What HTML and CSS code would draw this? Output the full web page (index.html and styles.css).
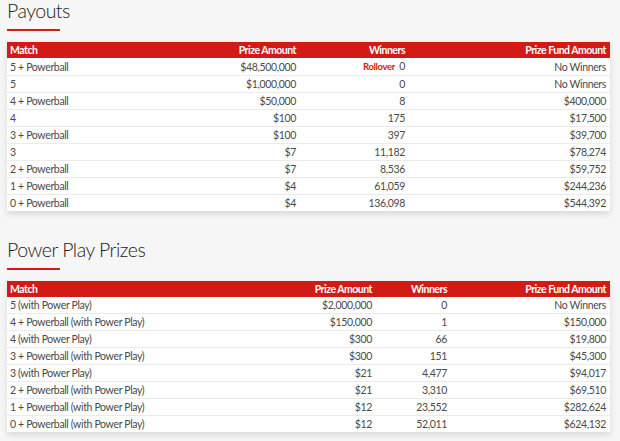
FILE: index.html
```html
<!DOCTYPE html>
<html>
<head>
<meta charset="utf-8">
<link rel="stylesheet" href="styles.css">
</head>
<body>
<section class="block">
  <h2 class="title">Payouts</h2>
  <div class="rule"></div>
  <table class="prizes t1">
    <colgroup><col class="c1"><col class="c2"><col class="c3"><col class="c4"></colgroup>
    <thead><tr><th class="l">Match</th><th>Prize Amount</th><th>Winners</th><th>Prize Fund Amount</th></tr></thead>
    <tbody>
      <tr><td class="l">5 + Powerball</td><td>$48,500,000</td><td><span class="roll">Rollover</span> 0</td><td>No Winners</td></tr>
      <tr><td class="l">5</td><td>$1,000,000</td><td>0</td><td>No Winners</td></tr>
      <tr><td class="l">4 + Powerball</td><td>$50,000</td><td>8</td><td>$400,000</td></tr>
      <tr><td class="l">4</td><td>$100</td><td>175</td><td>$17,500</td></tr>
      <tr><td class="l">3 + Powerball</td><td>$100</td><td>397</td><td>$39,700</td></tr>
      <tr><td class="l">3</td><td>$7</td><td>11,182</td><td>$78,274</td></tr>
      <tr><td class="l">2 + Powerball</td><td>$7</td><td>8,536</td><td>$59,752</td></tr>
      <tr><td class="l">1 + Powerball</td><td>$4</td><td>61,059</td><td>$244,236</td></tr>
      <tr><td class="l">0 + Powerball</td><td>$4</td><td>136,098</td><td>$544,392</td></tr>
    </tbody>
  </table>
</section>
<section class="block second">
  <h2 class="title">Power Play Prizes</h2>
  <div class="rule"></div>
  <table class="prizes t2">
    <colgroup><col class="c1"><col class="c2"><col class="c3"><col class="c4"></colgroup>
    <thead><tr><th class="l">Match</th><th>Prize Amount</th><th>Winners</th><th>Prize Fund Amount</th></tr></thead>
    <tbody>
      <tr><td class="l">5 (with Power Play)</td><td>$2,000,000</td><td>0</td><td>No Winners</td></tr>
      <tr><td class="l">4 + Powerball (with Power Play)</td><td>$150,000</td><td>1</td><td>$150,000</td></tr>
      <tr><td class="l">4 (with Power Play)</td><td>$300</td><td>66</td><td>$19,800</td></tr>
      <tr><td class="l">3 + Powerball (with Power Play)</td><td>$300</td><td>151</td><td>$45,300</td></tr>
      <tr><td class="l">3 (with Power Play)</td><td>$21</td><td>4,477</td><td>$94,017</td></tr>
      <tr><td class="l">2 + Powerball (with Power Play)</td><td>$21</td><td>3,310</td><td>$69,510</td></tr>
      <tr><td class="l">1 + Powerball (with Power Play)</td><td>$12</td><td>23,552</td><td>$282,624</td></tr>
      <tr><td class="l">0 + Powerball (with Power Play)</td><td>$12</td><td>52,011</td><td>$624,132</td></tr>
    </tbody>
  </table>
</section>
</body>
</html>
```
FILE: styles.css
```css
html, body {
  margin: 0;
  padding: 0;
}
body {
  background: #f6f6f6;
  font-family: Lato, "Open Sans", sans-serif;
  color: #4a4a4a;
  width: 620px;
  height: 441px;
  overflow: hidden;
}
.block {
  padding: 0 10px 0 7px;
}
.second {
  padding-top: 28px;
}
.title {
  margin: 0;
  font-weight: 300;
  font-size: 19.5px;
  line-height: 22px;
  color: #222;
  letter-spacing: -0.5px;
}
.rule {
  width: 53px;
  height: 2px;
  background: #d21b16;
  margin-top: 7px;
  margin-bottom: 11px;
}
.prizes {
  width: 603px;
  border-collapse: collapse;
  table-layout: fixed;
  background: #fff;
  box-shadow: 0 3px 6px rgba(0,0,0,0.12);
  font-size: 10.5px;
}
.prizes th {
  background: #d21b16;
  color: #fff;
  font-weight: 700;
  height: 16px;
  line-height: 16px;
  padding: 0 4px 0 3px;
  text-align: right;
  letter-spacing: -0.5px;
}
.prizes td {
  height: 16px;
  line-height: 16px;
  padding: 0 4px 0 3px;
  text-align: right;
  border-top: 1px solid #ebebeb;
  white-space: nowrap;
  letter-spacing: -0.35px;
}
.prizes tbody tr:first-child td {
  border-top: none;
}
.prizes .l {
  text-align: left;
}
.roll {
  color: #d21b16;
  font-weight: 700;
  font-size: 9.5px;
  margin-right: 2px;
}
.t1 .c1 { width: 200px; }
.t1 .c2 { width: 93px; }
.t1 .c3 { width: 109px; }
.t1 .c4 { width: 201px; }
.t2 .c1 { width: 280px; }
.t2 .c2 { width: 89px; }
.t2 .c3 { width: 75px; }
.t2 .c4 { width: 159px; }
```
